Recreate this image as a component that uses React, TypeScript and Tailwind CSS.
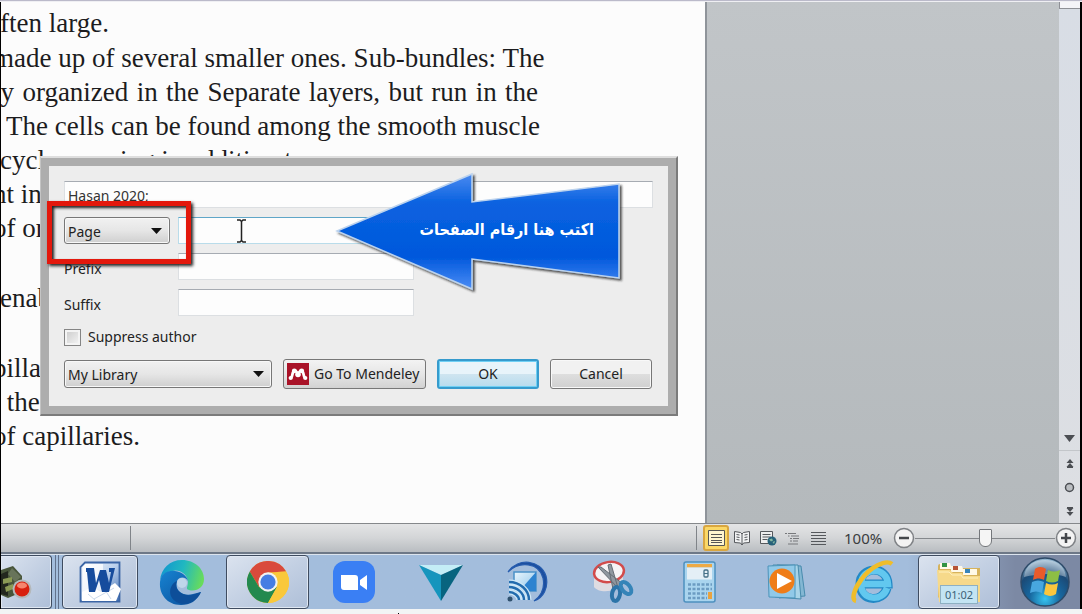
import type { ReactNode } from "react";

type Line = { text: string; fill?: boolean; clip?: boolean };

const paragraphs: Line[][] = [
  [{ text: "ften large." }],
  [
    { text: "made up of several smaller ones. Sub-bundles: The", fill: true, clip: true },
    { text: "ly organized in the Separate layers, but run in the", fill: true, clip: true },
    { text: ". The cells can be found among the smooth muscle", fill: true, clip: true },
    { text: "cycle, running in addition to" },
    { text: "nt in", clip: true },
    { text: "of or", clip: true },
  ],
  [{ text: "\u00a0" }],
  [{ text: "enab" }],
  [{ text: "\u00a0" }],
  [
    { text: "pillar", clip: true },
    { text: "\u00a0the" },
    { text: "of capillaries.", clip: true },
  ],
];

function DocumentText() {
  return (
    <div className="flex w-[537px] flex-col gap-px pt-1 font-['Liberation_Serif',serif] text-[27px] leading-[34px] text-[#1c1c1e]">
      {paragraphs.map((lines, i) => (
        <div key={i}>
          {lines.map((line, j) => (
            <p
              key={j}
              className={
                (line.fill ? "[text-align-last:justify] " : "") +
                (line.clip ? "-ml-2 whitespace-nowrap" : "-ml-px whitespace-nowrap")
              }
            >
              {line.text}
            </p>
          ))}
        </div>
      ))}
    </div>
  );
}

function Combo({ label, value, className }: { label: string; value: string; className: string }) {
  return (
    <div className={"relative " + className}>
      <select
        aria-label={label}
        defaultValue={value}
        className="h-full w-full appearance-none rounded-[3px] border border-[#777] bg-linear-to-b from-[#f1f1f1] via-[#e6e6e6] to-[#cfcfcf] pt-0.5 pl-[3px] text-[#222] shadow-[inset_0_0_0_1px_#f8f8f8]"
      >
        <option>{value}</option>
      </select>
      <svg className="pointer-events-none absolute top-1/2 right-2 h-[6px] w-[11px] -translate-y-1/2" viewBox="0 0 11 6">
        <path d="M0 0h11L5.500 6z" fill="#111" />
      </svg>
    </div>
  );
}

const fieldClass =
  "h-[27px] border border-[#dcdfe2] border-t-[#a6abb2] bg-[#fdfdfd] px-[3px] text-[#333] outline-none";

function MendeleyIcon() {
  return (
    <svg width="22" height="22" viewBox="0 0 22 22">
      <rect width="22" height="22" fill="#a91328" />
      <path d="M4 15C6 13 5 8 7.500 7.500C9.500 7.500 9.500 10 11 10.500C12.500 10 12.500 7.500 14.500 7.500C17 8 16 13 18 15" fill="none" stroke="#fff" strokeWidth="2.800" />
      <circle cx="7.300" cy="7.800" r="2.400" fill="#fff" />
      <circle cx="14.700" cy="7.800" r="2.400" fill="#fff" />
      <circle cx="11" cy="11.500" r="2.800" fill="#fff" />
      <circle cx="3.700" cy="15" r="2.100" fill="#fff" />
      <circle cx="18.300" cy="15" r="2.100" fill="#fff" />
    </svg>
  );
}

function Callout() {
  return (
    <div className="absolute top-[5px] left-[285px] h-[124px] w-[292px]">
      <svg className="absolute inset-0" width="292" height="124" viewBox="0 0 292 124">
        <defs>
          <linearGradient id="calloutFill" x1="0" y1="0" x2="0" y2="1">
            <stop offset="0" stopColor="#4a8af0" />
            <stop offset="0.250" stopColor="#0a62e0" />
            <stop offset="0.720" stopColor="#0058dc" />
            <stop offset="1" stopColor="#4b8cf5" />
          </linearGradient>
          <filter id="calloutShadow" x="-5%" y="-5%" width="115%" height="115%">
            <feDropShadow dx="2" dy="2" stdDeviation="1.200" floodColor="#222" floodOpacity="0.800" />
          </filter>
        </defs>
        <path
          d="M3 60L138 3V31L285 13V107L138 88V118Z"
          fill="url(#calloutFill)"
          stroke="#bcd3ee"
          strokeWidth="1.500"
          filter="url(#calloutShadow)"
        />
      </svg>
      <p dir="rtl" lang="ar" className="relative pt-[45px] pr-8 text-start font-['DejaVu_Sans_Condensed','DejaVu_Sans',sans-serif] text-[16px] leading-7 font-bold whitespace-nowrap text-white">
        اكتب هنا ارقام الصفحات
      </p>
    </div>
  );
}

function CitationDialog() {
  return (
    <section
      role="dialog"
      aria-label="Citation"
      className="absolute top-[154px] left-[39px] w-[638px] border-t-2 border-r-2 border-b-2 border-l border-t-[#dedede] border-r-[#7b7b7b] border-b-[#7b7b7b] border-l-[#c4c4c4] font-['Noto_Sans',sans-serif] text-[14px] leading-5 text-[#222]"
    >
      <div className="relative border-8 border-[#adadad] bg-[#ededed]">
        <form className="flex flex-col gap-[9px] px-[15px] pt-[15px] pb-[17px]" onSubmit={(e) => e.preventDefault()}>
          <input aria-label="Citation" defaultValue="Hasan 2020;" className={fieldClass + " w-full pt-0.5"} />
          <div className="flex gap-2">
            <Combo label="Locator" value="Page" className="h-[27px] w-[106px]" />
            <input aria-label="Locator value" className="h-[27px] w-[236px] border border-[#b9dcea] border-t-[#5fa6c8] bg-[#fdfdfd] px-1 outline-none" />
          </div>
          <div className="flex items-center">
            <label htmlFor="prefix" className="w-[114px] pt-1">Prefix</label>
            <input id="prefix" className={fieldClass + " w-[236px]"} />
          </div>
          <div className="flex items-center">
            <label htmlFor="suffix" className="w-[114px] pt-1">Suffix</label>
            <input id="suffix" className={fieldClass + " w-[236px]"} />
          </div>
          <label className="flex h-6 items-center gap-[7px]">
            <input type="checkbox" className="h-[17px] w-[17px] appearance-none border border-[#858585] bg-linear-to-br from-[#c9c9c9] to-[#f7f7f7] shadow-[inset_0_0_0_2px_#f4f4f4]" />
            Suppress author
          </label>
          <div className="flex h-[31px] items-center">
            <Combo label="Library" value="My Library" className="h-[28px] w-[208px]" />
            <button className="ml-[11px] flex h-[30px] w-[143px] items-center gap-[5px] rounded-[3px] border border-[#777] bg-linear-to-b from-[#f3f3f3] via-[#e6e6e6] to-[#d2d2d2] pl-[3px] whitespace-nowrap">
              <MendeleyIcon />
              Go To Mendeley
            </button>
            <button className="ml-[11px] h-[30px] w-[102px] rounded-[3px] border-2 border-[#369bcd] bg-linear-to-b from-[#e8f4fa] from-50% via-[#cfe5f0] via-50% to-[#b7dcee] shadow-[inset_0_0_0_1px_#6fd0f4]">
              OK
            </button>
            <button className="ml-[11px] h-[30px] w-[102px] rounded-[3px] border border-[#777] bg-linear-to-b from-[#f1f1f1] from-50% via-[#dedede] via-50% to-[#d0d0d0] shadow-[inset_0_0_0_1px_#f8f8f8]">
              Cancel
            </button>
          </div>
        </form>
        <div className="pointer-events-none absolute top-[35px] -left-[2px] h-[63px] w-[144px] border-[5px] border-[#e3180c] shadow-[2px_2px_3px_#222,inset_2px_2px_3px_#222]" />
        <svg className="pointer-events-none absolute top-[53px] left-[187px]" width="11" height="24" viewBox="0 0 11 24" fill="none" stroke="#222" strokeWidth="1.500">
          <path d="M1 1H4L5.500 2.500L7 1H10M5.500 2.500V21.500M1 23H4L5.500 21.500L7 23H10" />
        </svg>
        <Callout />
      </div>
    </section>
  );
}

function ScrollBar() {
  return (
    <div className="flex w-[21px] flex-col items-center bg-linear-to-b from-[#d8dde5] to-[#dddfe3] text-[#4b4e53]">
      <div className="h-[7px] w-full border-b border-l border-[#8e9096] bg-[#f4f4f8]" />
      <button aria-label="Scroll down" className="mt-auto flex h-6 w-full items-center justify-center border-b border-[#c3c6ca]">
        <svg width="11" height="7" viewBox="0 0 11 7"><path d="M0 0h11L5.500 7z" fill="currentColor" /></svg>
      </button>
      <button aria-label="Previous page" className="flex h-6 items-center">
        <svg width="8" height="9" viewBox="0 0 8 9" fill="currentColor"><path d="M4 0L7.500 4H.500zM4 4L7.500 8H.500zM1 8h6v1H1z" /></svg>
      </button>
      <button aria-label="Select browse object" className="flex h-6 items-center">
        <svg width="11" height="11" viewBox="0 0 11 11"><circle cx="5.500" cy="5.500" r="4" fill="#bbbec2" stroke="currentColor" strokeWidth="1.500" /></svg>
      </button>
      <button aria-label="Next page" className="flex h-6 items-center">
        <svg width="8" height="9" viewBox="0 0 8 9" fill="currentColor"><path d="M1 0h6v1H1zM.500 1h7L4 5zM.500 5h7L4 9z" /></svg>
      </button>
    </div>
  );
}

function StatusBar() {
  return (
    <footer className="flex h-[31px] items-center border-t border-b-2 border-t-[#85888b] border-b-[#6d7887] bg-linear-to-b from-[#e4e5e6] via-[#d3d5d7] to-[#b9bdc1]">
      <div className="h-6 w-[130px] border-r border-[#808489]" />
      <div className="ml-auto h-6 border-l border-[#808489]" />
      <div className="ml-[6px] flex items-center text-[#55585c]">
        <button aria-label="Print layout" className="flex h-[26px] w-[26px] items-center justify-center rounded-[3px] border-2 border-[#d9a640] bg-[#fbd867]">
          <svg width="17" height="16" viewBox="0 0 17 16" stroke="#555"><path d="M.500.500h16v15H.500z" fill="#fff5cf" /><path d="M3 4.500h11M3 7.500h11M3 10.500h11M3 12.500h11" /></svg>
        </button>
        <button aria-label="Full screen reading" className="flex w-[26px] justify-center">
          <svg width="16" height="16" viewBox="0 0 16 16" fill="#f1f2f3" stroke="currentColor"><path d="M.500 1.500L6.500 2.500L8 4L9.500 2.500L15.500 1.500V12.500L9.500 13L8 15L6.500 13L.500 12.500zM8 4V15" /><path d="M2.500 4.500l3 .500M2.500 7l3 .500M2.500 9.500l3 .500M10.500 5l3-.500M10.500 7.500l3-.500M10.500 10l3-.500" /></svg>
        </button>
        <button aria-label="Web layout" className="flex w-[25px] justify-center">
          <svg width="18" height="16" viewBox="0 0 18 16"><path d="M1.500 1.500h12v12h-12z" fill="#eee" stroke="#55585c" /><path d="M3.500 4.500h8M3.500 7h8M3.500 9.500h5" stroke="#55585c" /><circle cx="13" cy="11" r="4.500" fill="#27627a" /><path d="M10 9.500l3-1 1 2-2 1zM13.500 12l2.500-1-1 3z" fill="#83b6a0" /></svg>
        </button>
        <button aria-label="Outline" className="flex w-[25px] justify-center">
          <svg width="15" height="13" viewBox="0 0 15 13" stroke="#77797c"><path d="M0 1.500h2M3 1.500h8M3 4h1.500M6 4h8M5 6.500h2M8 6.500h6M5 9h2M8 9h5M3 12h10" /></svg>
        </button>
        <button aria-label="Draft" className="flex w-[27px] justify-center">
          <svg width="15" height="13" viewBox="0 0 15 13" stroke="currentColor"><path d="M0 .500h15M0 3.500h15M0 6.500h15M0 9.500h15M0 12.500h15" /></svg>
        </button>
      </div>
      <span className="ml-3 w-[49px] font-['Noto_Sans',sans-serif] text-[15px] leading-5 text-[#3b3d40]">100%</span>
      <button aria-label="Zoom out">
        <svg width="22" height="22" viewBox="0 0 22 22"><circle cx="11" cy="11" r="9.500" fill="#f3f3f3" stroke="#7e8185" strokeWidth="1.500" /><path d="M6 11h10" stroke="#44474b" strokeWidth="2.500" /></svg>
      </button>
      <input
        type="range"
        aria-label="Zoom"
        defaultValue={50}
        className="h-[18px] w-[140px] appearance-none bg-[linear-gradient(#85888c,#85888c)] bg-[length:100%_1px] bg-center bg-no-repeat [&::-webkit-slider-thumb]:h-[18px] [&::-webkit-slider-thumb]:w-[13px] [&::-webkit-slider-thumb]:appearance-none [&::-webkit-slider-thumb]:rounded-t-[1px] [&::-webkit-slider-thumb]:rounded-b-[6px] [&::-webkit-slider-thumb]:border [&::-webkit-slider-thumb]:border-[#74777b] [&::-webkit-slider-thumb]:bg-[#f5f5f5]"
      />
      <button aria-label="Zoom in" className="mr-[3px]">
        <svg width="22" height="22" viewBox="0 0 22 22"><circle cx="11" cy="11" r="9.500" fill="#f3f3f3" stroke="#7e8185" strokeWidth="1.500" /><path d="M6 11h10M11 6v10" stroke="#44474b" strokeWidth="2.500" /></svg>
      </button>
    </footer>
  );
}

function RecorderIcon() {
  return (
    <svg width="34" height="40" viewBox="0 0 34 40">
      <path d="M0 8L12 4L21 14V30L7 36L0 33Z" fill="#48553a" />
      <path d="M0 12L7 9V34L0 32Z" fill="#23271e" />
      <path d="M11 6L20 15L14 20L7 12Z" fill="#68745a" />
      <path d="M2 17L11 15V20L2 22ZM4 25L12 22V27L5 30Z" fill="#8b9a55" />
      <circle cx="21" cy="27" r="9.500" fill="#b4b8ba" />
      <circle cx="21" cy="27" r="7.500" fill="#d8200f" />
      <ellipse cx="21" cy="23.500" rx="5" ry="3" fill="#f6856e" />
    </svg>
  );
}

function WordIcon() {
  return (
    <svg width="42" height="42" viewBox="0 0 42 42">
      <defs><linearGradient id="wordPage" x1="0" y1="0" x2="1" y2="1"><stop offset="0" stopColor="#fff" /><stop offset="0.500" stopColor="#b9cfec" /><stop offset="1" stopColor="#3d6cb2" /></linearGradient></defs>
      <path d="M6 1.500H40.500V40.500H1.500V6Z" fill="url(#wordPage)" stroke="#3b65a5" strokeWidth="1.800" />
      <path d="M4 6L7 3H24V32H3Z" fill="#fff" opacity=".75" />
      <path d="M3 31L13 26L22 31L36 22L42 28L37 40H3Z" fill="#fff" />
      <path d="M9 33l7 6M26 29l6 9M15 38l20-11" stroke="#cbd9eb" />
      <path d="M7 7h8l2 15 4-13h6l3 13 2-11h-2V7h6l-6 24h-7l-3-12-4 12h-6L8 11H7Z" fill="#164c9d" />
    </svg>
  );
}

function EdgeIcon() {
  return (
    <svg width="45" height="46" viewBox="0 0 45 46">
      <defs>
        <linearGradient id="edgeTop" x1="0" y1="0.300" x2="1" y2="0.500"><stop offset="0" stopColor="#1196cf" /><stop offset="0.500" stopColor="#21b8c0" /><stop offset="1" stopColor="#68dc5b" /></linearGradient>
        <linearGradient id="edgeLow" x1="0" y1="0" x2="1" y2="1"><stop offset="0" stopColor="#1783d1" /><stop offset="1" stopColor="#0a4c98" /></linearGradient>
      </defs>
      <path d="M1 22C2 9 11 1 23 1C36 1 45 10 45 20C45 29 37 33 30 31C26 30 29 28 29 23C28 14 20 10 13 12C6 13 2 17 1 22Z" fill="url(#edgeTop)" />
      <path d="M1 23C2 14 9 11 16 12C23 13 28 17 29 22C28 19 21 16 18 22C15 32 25 38 34 35L42 33C38 42 31 46 22 46C8 46 0 35 1 23Z" fill="url(#edgeLow)" />
      <path d="M18 22C14 32 25 38 34 36L42 33C37 43 27 47 20 44C8 40 9 26 18 22Z" fill="#0d4e99" />
      <circle cx="23" cy="24" r="5" fill="#bfd6ea" />
    </svg>
  );
}

function ChromeIcon() {
  return (
    <svg width="42" height="42" viewBox="0 0 42 42">
      <circle cx="21" cy="21" r="21" fill="#f9c83c" />
      <path d="M2.800 10.500A21 21 0 0 1 39.200 10.500L21 11.500L12 26Z" fill="#d94a3c" />
      <path d="M2.800 10.500A21 21 0 0 0 21 42L30 26L21 30L12 26Z" fill="#23894f" />
      <path d="M39.200 10.500A21 21 0 0 1 21 42L30 26V11Z" fill="#f9c83c" />
      <circle cx="21" cy="21" r="9.700" fill="#f2f2f2" />
      <circle cx="21" cy="21" r="7.600" fill="#467de3" />
    </svg>
  );
}

function ZoomIcon() {
  return (
    <svg width="42" height="42" viewBox="0 0 42 42">
      <rect width="42" height="42" rx="12" fill="#3a7ff4" />
      <path d="M8 14h14q3 0 3 3v12H11q-3 0-3-3ZM27 19l7-5v15l-7-5Z" fill="#fff" />
    </svg>
  );
}

function TriangleIcon() {
  return (
    <svg width="44" height="37" viewBox="0 0 44 37">
      <path d="M0 1H44L22 11Z" fill="#c4edf6" />
      <path d="M0 1L22 11V37Z" fill="#1595bd" />
      <path d="M44 1L22 11V37Z" fill="#08647f" />
    </svg>
  );
}

function CastIcon() {
  return (
    <svg width="44" height="44" viewBox="0 0 44 44" fill="none">
      <defs><linearGradient id="castScreen" x1="0" y1="0" x2="1" y2="1"><stop offset="0" stopColor="#eaf6fd" /><stop offset="1" stopColor="#8dc4ea" /></linearGradient></defs>
      <path d="M3 12C13-3 36 0 41 16C44 28 38 38 29 41C36 36 40 28 38 18C34 2 14 1 3 12Z" fill="#1c4f9f" stroke="#265cae" strokeWidth="1.200" />
      <path d="M9 12L31 12V31H20L9 21Z" fill="url(#castScreen)" stroke="#4b91c8" strokeWidth="1.500" />
      <path d="M31 12V31H20L17 28Z" fill="#2d83d0" />
      <path d="M4 22C15 22 24 30 24 40M4 27C12 27 19 33 19 40M4 32C9 32 14 36 14 40" stroke="#cfe8f7" strokeWidth="5" />
      <path d="M4 22C15 22 24 30 24 40M4 27C12 27 19 33 19 40M4 32C9 32 14 36 14 40" stroke="#236cae" strokeWidth="2.500" />
      <circle cx="5" cy="39" r="2.500" fill="#30516e" />
    </svg>
  );
}

function SnipIcon() {
  return (
    <svg width="42" height="44" viewBox="0 0 42 44" fill="none">
      <path d="M2 14V27C7 34 26 32 31 23V11Z" fill="#dedce2" />
      <ellipse cx="17" cy="12" rx="15" ry="10" fill="#f5f3f5" stroke="#d24b4b" strokeWidth="2.500" transform="rotate(-9 17 12)" />
      <path d="M6 7L9 7L31 24L26 28ZM16 5L19 4L26 28L21 29Z" fill="#8f979f" stroke="#656c74" />
      <ellipse cx="24" cy="34" rx="4" ry="7" stroke="#2c74a8" strokeWidth="4" transform="rotate(10 24 34)" />
      <ellipse cx="34" cy="28" rx="4" ry="7" stroke="#3584b8" strokeWidth="4" transform="rotate(-38 34 28)" />
    </svg>
  );
}

function CalculatorIcon() {
  return (
    <svg width="33" height="42" viewBox="0 0 33 42">
      <rect x="1" y="1" width="31" height="40" rx="2" fill="#a9d4ee" stroke="#4e90bf" strokeWidth="1.500" />
      <rect x="4" y="3" width="25" height="3.500" fill="#edaa45" />
      <rect x="4" y="6.500" width="25" height="12" fill="#e4eff6" />
      <rect x="21" y="9" width="4" height="7" rx="1" fill="none" stroke="#467087" strokeWidth="1.300" /><path d="M21 12.500h4" stroke="#467087" />
      <path d="M5 23.500H29M5 28H29M5 32.500H24M5 37H24" stroke="#6c9cc2" strokeWidth="2.500" strokeDasharray="3 1.500" />
      <rect x="25" y="31" width="4" height="7" fill="#e9a33f" />
    </svg>
  );
}

function PlayerIcon() {
  return (
    <svg width="39" height="36" viewBox="0 0 39 36">
      <path d="M10 1L34 2L38 32L12 34Z" fill="#83b7d3" stroke="#488bad" />
      <path d="M6 1L31 1L34 35L8 33Z" fill="#a9d4e8" stroke="#488bad" />
      <path d="M1 2L28 1V34L2 33Z" fill="#91c9e8" stroke="#4c94ba" />
      <circle cx="15" cy="17" r="12.500" fill="#ef7d18" />
      <path d="M10 9L25 17L10 25Z" fill="#fff" />
    </svg>
  );
}

function ExplorerIcon() {
  return (
    <svg width="44" height="44" viewBox="0 0 44 44" fill="none">
      <path d="M36 28C32 43 9 42 9 24C9 6 36 5 37 24H13" stroke="#2389c6" strokeWidth="9" />
      <path d="M36 28C32 42 10 41 10 24C10 7 36 6 37 24H13" stroke="#62c8ef" strokeWidth="6.500" />
      <path d="M5 41C0 40 3 29 10 20C19 7 35-1 41 4" stroke="#efbd2b" strokeWidth="4.500" />
    </svg>
  );
}

function FolderIcon() {
  return (
    <div className="relative flex h-[44px] w-[48px] items-end justify-center">
      <svg className="absolute inset-0" width="48" height="44" viewBox="0 0 48 44">
        <path d="M3 6Q3 4 5 4H13L16 8H45V40H6L3 37Z" fill="#d6b35d" />
        <path d="M5 3H15L17 9H5ZM16 6H27L29 12H16ZM28 9H42V15H28Z" fill="#fff9e8" />
        <path d="M7 3h5v4H7z" fill="#319344" /><path d="M18 6h5v4h-5z" fill="#b65335" /><path d="M30 9h5v4h-5z" fill="#3684ba" />
        <path d="M2 10H15L18 13H27L29 16H45V42H4Z" fill="#f6d98a" />
        <path d="M4 12H14L17 15H26L28 18H43" stroke="#fff0bd" fill="none" />
      </svg>
      <time className="relative h-[19px] w-[38px] border border-[#8eb0c2] bg-[#c3e4f3] text-center font-['Noto_Sans',sans-serif] text-[11px] leading-[17px] text-[#3c6278]">01:02</time>
    </div>
  );
}

function WindowsIcon() {
  return (
    <svg width="50" height="50" viewBox="0 0 50 50">
      <defs>
        <radialGradient id="orb" cx="0.500" cy="0.850" r="0.800"><stop offset="0" stopColor="#37c4f0" /><stop offset="0.400" stopColor="#17679f" /><stop offset="0.750" stopColor="#1b4a76" /><stop offset="1" stopColor="#8fb2cc" /></radialGradient>
      </defs>
      <circle cx="25" cy="25" r="24" fill="url(#orb)" stroke="#2d4a68" strokeWidth="1.500" />
      <path d="M4 20C5 8 15 3 25 3S45 8 46 20C34 15 17 17 4 20Z" fill="#fff" opacity=".35" />
      <path d="M15 12C19 9 23 10 26 12L24 23C20 21 17 21 13 23Z" fill="#e95b2a" />
      <path d="M28 13C32 15 36 15 40 13L38 24C34 26 30 26 26 24Z" fill="#8dbe45" />
      <path d="M12 25C16 23 20 23 24 25L22 36C18 34 14 34 10 36Z" fill="#48a7df" />
      <path d="M26 26C30 28 34 28 38 26L36 37C32 40 27 39 24 37Z" fill="#fbc63d" />
    </svg>
  );
}

const activeTask =
  "rounded-[4px] border border-[#3f4c60] bg-linear-to-br from-[#dbe3ef] via-[#c3d0e3] to-[#aebfd8] shadow-[inset_0_0_0_1px_#dfe7f2]";

function Task({ label, active, children }: { label: string; active?: boolean; children: ReactNode }) {
  return (
    <button
      aria-label={label}
      className={
        "mx-[2px] flex h-full flex-1 items-center justify-center " +
        (active ? activeTask : "border border-transparent")
      }
    >
      {children}
    </button>
  );
}

function Taskbar() {
  return (
    <nav aria-label="Taskbar" className="flex h-[55px] items-center border-t border-[#dce4ee] bg-linear-to-r from-[#a3bddc] from-84% to-[#7c89a4] to-94%">
      <button aria-label="Recorder" className={"flex h-full w-[51px] items-center rounded-l-none border-l-0 " + activeTask}>
        <RecorderIcon />
      </button>
      <div className="mx-[3px] h-full w-[4px] border-x border-[#61718b]" />
      <button aria-label="Word" className={"flex h-full w-[76px] items-center justify-center " + activeTask}>
        <WordIcon />
      </button>
      <div className="flex h-full flex-1">
        <Task label="Edge"><EdgeIcon /></Task>
        <Task label="Chrome" active><ChromeIcon /></Task>
        <Task label="Zoom meetings"><ZoomIcon /></Task>
        <Task label="Filmora"><TriangleIcon /></Task>
        <Task label="Connect"><CastIcon /></Task>
        <Task label="Snipping tool"><SnipIcon /></Task>
        <Task label="Calculator"><CalculatorIcon /></Task>
        <Task label="Media player"><PlayerIcon /></Task>
        <Task label="Internet Explorer"><ExplorerIcon /></Task>
      </div>
      <button aria-label="File explorer" className={"ml-[2px] flex h-full w-[82px] items-center justify-center " + activeTask}>
        <FolderIcon />
      </button>
      <button aria-label="Start" className="mr-[10px] ml-5">
        <WindowsIcon />
      </button>
    </nav>
  );
}

export default function App() {
  return (
    <div className="flex min-h-screen flex-col overflow-hidden bg-[#f2f4f5]">
      <div className="h-[2px] border-t border-[#bbbaca] bg-[#efeff3]" />
      <div className="flex flex-1 flex-col border-r-2 border-l border-black">
        <main className="relative flex flex-1 overflow-hidden bg-linear-to-b from-[#c1c5c8] to-[#b4b9bc]">
          <article className="w-[706px] overflow-hidden border-r-2 border-[#8f949a] bg-[#fcfcfc]">
            <DocumentText />
          </article>
          <div className="flex-1" />
          <ScrollBar />
          <CitationDialog />
        </main>
        <StatusBar />
        <Taskbar />
      </div>
      <div className="flex h-[5px] items-end pl-[398px]">
        <div className="h-px w-px bg-black" />
      </div>
    </div>
  );
}
